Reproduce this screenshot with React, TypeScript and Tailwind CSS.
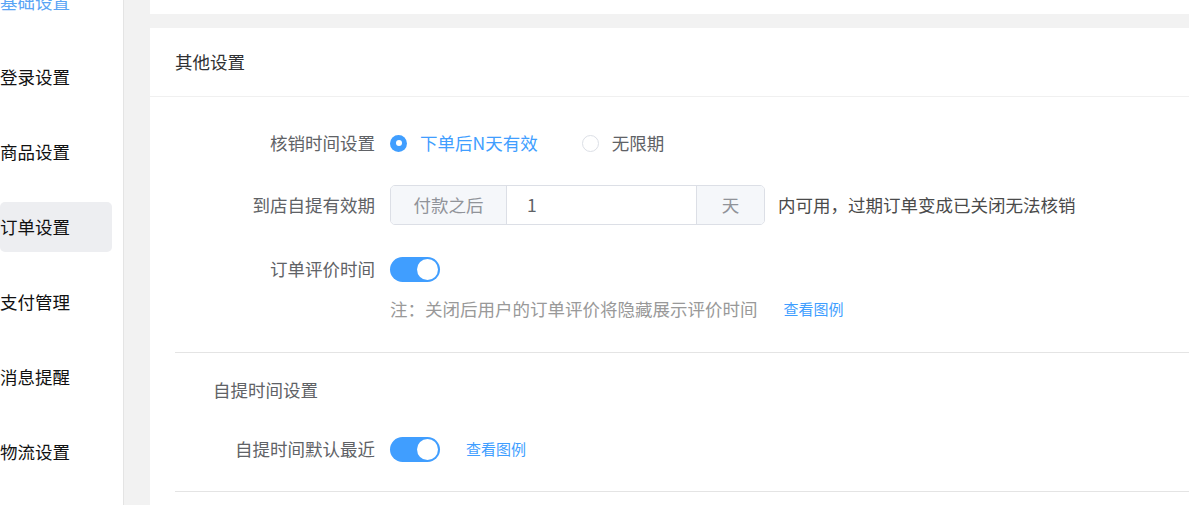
const menu = ['基础设置', '登录设置', '商品设置', '订单设置', '支付管理', '消息提醒', '物流设置'];

function Switch() {
  return (
    <div className="relative w-[50px] h-[25px] rounded-full bg-[#409eff]">
      <span className="absolute right-[2px] top-[2px] w-[21px] h-[21px] rounded-full bg-white" />
    </div>
  );
}

function Radio({ checked, label }: { checked?: boolean; label: string }) {
  return (
    <label className="flex items-center">
      {checked ? (
        <span className="w-[17px] h-[17px] rounded-full bg-[#409eff] flex items-center justify-center">
          <span className="w-[6px] h-[6px] rounded-full bg-white" />
        </span>
      ) : (
        <span className="w-[17px] h-[17px] rounded-full border border-[#dcdfe6] bg-white" />
      )}
      <span className={`pl-[13px] ${checked ? 'text-[#409eff]' : 'text-[#606266]'}`}>{label}</span>
    </label>
  );
}

function Row({ label, children, className = '' }: { label: string; children: React.ReactNode; className?: string }) {
  return (
    <div className={`flex items-center h-[40px] ${className}`}>
      <div className="w-[215px] pr-[15px] text-right text-[#606266] shrink-0">{label}</div>
      <div className="flex items-center">{children}</div>
    </div>
  );
}

export default function App() {
  return (
    <div
      className="flex h-[505px] w-[1189px] overflow-hidden bg-[#f2f2f2] text-[17.5px] leading-[20px]"
      style={{ fontFamily: '"Noto Sans CJK SC", "Noto Sans", sans-serif' }}
    >
      <aside className="w-[124px] shrink-0 bg-white border-r border-[#e4e4e4]">
        <div className="flex flex-col gap-[25px] -mt-[23px] w-[112px]">
          {menu.map((m, i) => (
            <div
              key={m}
              className={`h-[50px] flex items-center rounded-[5px] ${i === 3 ? 'bg-[#edeef1]' : ''} ${
                i === 0 ? 'text-[#5aa5f5]' : 'text-[#111]'
              }`}
            >
              {m}
            </div>
          ))}
        </div>
      </aside>

      <main className="flex-1 pl-[26px] flex flex-col">
        <div className="h-[14px] bg-white shrink-0" />
        <div className="mt-[14px] bg-white flex-1">
          <div className="h-[69px] flex items-center px-[25px] border-b border-[#f0f0f0] text-[#303133]">其他设置</div>

          <div className="pl-[25px] pt-[26px]">
            <Row label="核销时间设置">
              <div className="flex items-center gap-[44px]">
                <Radio checked label="下单后N天有效" />
                <Radio label="无限期" />
              </div>
            </Row>

            <Row label="到店自提有效期" className="mt-[22px]">
              <div className="flex h-[40px] w-[375px] border border-[#dcdfe6] rounded-[5px] overflow-hidden">
                <div className="w-[116px] bg-[#f5f7fa] border-r border-[#dcdfe6] flex items-center justify-center text-[#909399]">付款之后</div>
                <div className="flex-1 flex items-center pl-[20px] text-[#606266]">1</div>
                <div className="w-[68px] bg-[#f5f7fa] border-l border-[#dcdfe6] flex items-center justify-center text-[#909399]">天</div>
              </div>
              <span className="ml-[13px] text-[#4a4a4a]">内可用，过期订单变成已关闭无法核销</span>
            </Row>

            <Row label="订单评价时间" className="mt-[24px]">
              <Switch />
            </Row>

            <div className="mt-[10px] pl-[215px] flex items-center h-[20px]">
              <span className="text-[#999]">注：关闭后用户的订单评价将隐藏展示评价时间</span>
              <a className="ml-[26px] text-[15px] text-[#409eff]">查看图例</a>
            </div>

            <div className="mt-[33px] border-t border-[#e4e4e4]" />

            <div className="mt-[27px] pl-[38px] h-[20px] text-[#606266]">自提时间设置</div>

            <Row label="自提时间默认最近" className="mt-[29px]">
              <Switch />
              <a className="ml-[26px] text-[15px] text-[#409eff]">查看图例</a>
            </Row>

            <div className="mt-[22px] border-t border-[#e4e4e4]" />
          </div>
        </div>
      </main>
    </div>
  );
}
